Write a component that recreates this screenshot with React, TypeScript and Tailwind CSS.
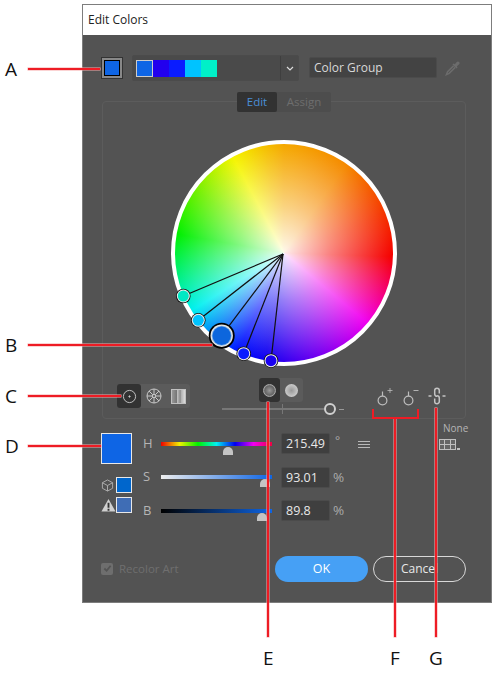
import React from "react";

function Wheel() {
  const cx = 112;
  const cy = 114;
  const dots = [
    { x: 12.3, y: 156, r: 6.5, c: "#00e8c4" },
    { x: 27.3, y: 180.3, r: 6.5, c: "#00c3ff" },
    { x: 72.7, y: 213.7, r: 6.5, c: "#0a1cff" },
    { x: 100, y: 220.7, r: 6.5, c: "#1a00f0" },
  ];
  return (
    <div className="relative w-[226px] h-[226px] mx-auto mt-[28px] rounded-full border-[4px] border-white bg-[radial-gradient(circle,rgba(255,255,255,0.92)_0%,rgba(255,255,255,0.5)_30%,rgba(255,255,255,0)_70%),conic-gradient(from_0deg,#f5a800_0deg,#f58a00_35deg,#f53000_70deg,#f50000_92deg,#f500a0_118deg,#f000f0_130deg,#7a00f0_160deg,#1000f0_190deg,#0010ff_205deg,#00f0f0_238deg,#00f090_255deg,#00f000_280deg,#70f000_305deg,#f5f500_332deg,#f5c000_350deg,#f5a800_360deg)]">
      <svg viewBox="0 0 225 225" className="absolute left-[-4px] top-[-4px] w-[225px] h-[225px] overflow-visible">
        {dots.map((d) => (
          <line key={d.x} x1={cx} y1={cy} x2={d.x} y2={d.y} stroke="#111" strokeWidth="1.2" />
        ))}
        <line x1={cx} y1={cy} x2={50.7} y2={195.7} stroke="#111" strokeWidth="1.2" />
        {dots.map((d) => (
          <g key={d.c}>
            <circle cx={d.x} cy={d.y} r={d.r + 0.8} fill="#111" />
            <circle cx={d.x} cy={d.y} r={d.r} fill="#eee" />
            <circle cx={d.x} cy={d.y} r={d.r - 1} fill={d.c} />
          </g>
        ))}
        <circle cx={50.7} cy={195.7} r={13} fill="#000" />
        <circle cx={50.7} cy={195.7} r={11.2} fill="#e8e8e8" />
        <circle cx={50.7} cy={195.7} r={10} fill="#7fb0e8" />
        <circle cx={50.7} cy={195.7} r={9.2} fill="#0d66dd" />
      </svg>
    </div>
  );
}

function Eyedropper() {
  return (
    <svg viewBox="0 0 16 16" className="w-[16px] h-[16px] ml-[8px] -mt-[1px]" fill="none">
      <path d="M8.5 3.6l1.4 0.6 1.6-2c0.9-1 2-0.9 2.6-0.2 0.7 0.7 0.7 1.7-0.2 2.6l-2 1.6 0.6 1.4-1 1-4-4z" fill="#6c6c6c" />
      <path d="M8.6 5.8L2.6 11.8 1.4 14.6 4.2 13.4 10.2 7.4" stroke="#6c6c6c" strokeWidth="1.5" />
    </svg>
  );
}

function HarmonyIcon({ sign }: { sign: "+" | "-" }) {
  return (
    <svg viewBox="0 0 20 20" className="w-[20px] h-[20px] overflow-visible" fill="none" stroke="#bdbdbd" strokeWidth="1.2">
      <circle cx="6.5" cy="13.5" r="4.4" />
      <path d="M6.5 9V4.5" />
      {sign === "+" ? <path d="M11.5 3.5h5M14 1v5" strokeWidth="0.8" /> : <path d="M11.5 3.5h5" strokeWidth="0.9" />}
    </svg>
  );
}

function LinkIcon() {
  return (
    <svg viewBox="0 0 18 18" className="w-[18px] h-[18px]" fill="none" stroke="#c4c4c4" strokeWidth="1.5">
      <path d="M11.3 6.5V3.6a2.3 2.3 0 0 0-4.6 0v3.4a2.3 2.3 0 0 0 2.3 2.3" />
      <path d="M6.7 11.5v2.9a2.3 2.3 0 0 0 4.6 0v-3.4a2.3 2.3 0 0 0-2.3-2.3" />
      <path d="M0.5 9h3M14.5 9h3" />
    </svg>
  );
}

function Thumb({ pos }: { pos: string }) {
  return <div className={`absolute w-[10px] h-[8px] rounded-t-[5px] bg-[#c4c4c4] ${pos}`} />;
}

function Row({ label, track, thumb, value, unit }: { label: string; track: string; thumb: string; value: string; unit: string }) {
  return (
    <div className="flex items-center h-[21px]">
      <span className="w-[18px] text-[13px] text-[#b5b5b5]">{label}</span>
      <div className={`relative w-[111px] h-[4px] ${track}`}>
        <Thumb pos={thumb} />
      </div>
      <div className="ml-[9px] w-[49px] h-[21px] bg-[#3f3f3f] border border-[#4b4b4b] rounded-[2px] pl-[4px] text-[12.5px] leading-[19px] text-[#e8e8e8]">{value}</div>
      <span className={`ml-[3px] text-[#aaa] ${unit === "°" ? "text-[12px] ml-[5px] -mt-[5px]" : "text-[13.5px]"}`}>{unit}</span>
    </div>
  );
}

function Label({ children, pos }: { children: React.ReactNode; pos: string }) {
  return <div className={`absolute text-[19px] leading-[24px] text-[#111] ${pos}`}>{children}</div>;
}

function Line({ pos }: { pos: string }) {
  return <div className={`absolute bg-[#ee1c25] shadow-[0_0_0_0.5px_#f7a8a8] ${pos}`} />;
}

export default function App() {
  return (
    <div className="relative w-[500px] h-[677px] bg-white overflow-hidden font-['Open_Sans','Noto_Sans',sans-serif]">
      <div className="absolute left-[82px] top-[4px] w-[410px] h-[599px] border border-[#7d7d7d] flex flex-col">
        <div className="h-[30px] bg-white px-[5px] text-[12px] leading-[30px] text-[#222]">Edit Colors</div>
        <div className="flex-1 bg-[#535353]">
          <div className="flex items-center pl-[18px] mt-[20px] h-[26px]">
            <div className="w-[22px] h-[22px] bg-[#0e65e5] shadow-[inset_0_0_0_1px_#333,inset_0_0_0_3px_#888,inset_0_0_0_4px_#000]" />
            <div className="ml-[9px] w-[167px] h-[26px] flex border border-[#4b4b4b] bg-[#4a4a4a] rounded-[2px]">
              <div className="flex-1 flex items-center pl-[3px]">
                <div className="w-[17px] h-[17px] bg-[#0e65e5] border border-[#ccc]" />
                <div className="w-[16px] h-[17px] bg-[#2200ee]" />
                <div className="w-[16px] h-[17px] bg-[#0a1cff]" />
                <div className="w-[16px] h-[17px] bg-[#00c3ff]" />
                <div className="w-[16px] h-[17px] bg-[#00f0c8]" />
              </div>
              <div className="w-[18px] border-l border-[#3f3f3f] flex items-center justify-center">
                <svg viewBox="0 0 8 5" className="w-[8px] h-[5px]" fill="none" stroke="#ddd" strokeWidth="1.2"><path d="M1 1l3 3 3-3" /></svg>
              </div>
            </div>
            <div className="ml-[10px] mb-[2px] w-[128px] h-[21px] bg-[#434343] border border-[#4b4b4b] rounded-[2px] pl-[4px] text-[12px] leading-[19px] text-[#d8d8d8]">Color Group</div>
            <Eyedropper />
          </div>

          <div className="ml-[19px] mt-[20px] w-[364px] h-[318px] border border-[#5c5c5c] rounded-[4px]">
            <div className="flex w-[94px] h-[20px] mx-auto -mt-[10px] bg-[#4d4d4d] rounded-[2px] text-[11.5px] leading-[20px] font-medium text-center">
              <div className="w-[40px] bg-[#323232] rounded-[2px] text-[#4a8fd8]">Edit</div>
              <div className="flex-1 text-[#6e6e6e]">Assign</div>
            </div>
            <Wheel />
            <div className="flex items-start mt-[12px]">
              <div className="ml-[14px] mt-[6px] w-[73px] h-[24px] flex bg-[#5b5b5b] rounded-[3px]">
                <div className="w-[24px] h-[24px] bg-[#323232] rounded-[3px] flex items-center justify-center">
                  <svg viewBox="0 0 16 16" className="w-[15px] h-[15px]" fill="none" stroke="#c8c8c8"><circle cx="8" cy="8" r="6.5" /><circle cx="8" cy="8" r="0.7" fill="#c8c8c8" /></svg>
                </div>
                <div className="w-[25px] flex items-center justify-center">
                  <svg viewBox="0 0 16 16" className="w-[16px] h-[16px]" fill="none" stroke="#c8c8c8"><circle cx="8" cy="8" r="7" /><circle cx="8" cy="8" r="1.6" /><path d="M8 1v5.4M8 9.6V15M1 8h5.4M9.6 8H15M3 3l3.8 3.8M9.2 9.2L13 13M13 3L9.2 6.8M6.8 9.2L3 13" /></svg>
                </div>
                <div className="w-[24px] flex items-center justify-center">
                  <div className="w-[15px] h-[15px] border border-[#c0c0c0] bg-[linear-gradient(90deg,#999_0%,#777_35%,#ccc_36%,#888_65%,#aaa_66%,#ddd_100%)]" />
                </div>
              </div>
              <div className="ml-[32px] w-[123px]">
                <div className="ml-[37px] w-[44px] h-[24px] flex bg-[#5b5b5b] rounded-[3px]">
                  <div className="w-[21px] h-[24px] bg-[#323232] rounded-[3px] flex items-center justify-center">
                    <div className="w-[13px] h-[13px] rounded-full border border-[#aaa] bg-[radial-gradient(circle,#999_0%,#666_60%,#aaa_100%)]" />
                  </div>
                  <div className="flex-1 flex items-center justify-center">
                    <div className="w-[13px] h-[13px] rounded-full bg-[radial-gradient(circle,#999_0%,#e0e0e0_100%)]" />
                  </div>
                </div>
                <div className="relative h-[12px] mt-[1px] flex items-center">
                  <div className="w-[102px] h-[2px] bg-[#777]" />
                  <div className="w-[12px] h-[12px] rounded-full border-[2px] border-[#d0d0d0]" />
                  <div className="ml-[3px] w-[5px] h-[1px] bg-[#999]" />
                  <div className="absolute left-[60px] top-[1px] w-[1px] h-[10px] bg-[#777]" />
                </div>
              </div>
              <div className="ml-[31px] mt-[9px] flex gap-[6px]">
                <HarmonyIcon sign="+" />
                <HarmonyIcon sign="-" />
              </div>
              <div className="ml-[6px] mt-[9px]"><LinkIcon /></div>
            </div>
          </div>

          <div className="flex pl-[18px] mt-[14px]">
            <div className="w-[42px]">
              <div className="w-[31px] h-[31px] bg-[#0e65e5] border border-[#e8e8e8]" />
              <div className="mt-[13px] flex items-center">
                <svg viewBox="0 0 14 14" className="w-[13px] h-[13px]" fill="none" stroke="#b0b0b0"><path d="M7 1l5.5 3v6L7 13l-5.5-3V4zM1.5 4L7 7l5.5-3M7 7v6" /></svg>
                <div className="ml-[2px] w-[16px] h-[16px] bg-[#0066cc] border border-[#e8e8e8]" />
              </div>
              <div className="mt-[4px] flex items-center">
                <svg viewBox="0 0 16 14" className="w-[15px] h-[14px]"><path d="M8 0.5L15.5 14H0.5z" fill="#d0d0d0" /><path d="M7 4.5h2v5.5H7zM7 11h2v2H7z" fill="#333" /></svg>
                <div className="-ml-[0px] w-[16px] h-[16px] bg-[#3f6db5] border border-[#e8e8e8]" />
              </div>
            </div>
            <div className="flex flex-col gap-[12.5px]">
              <Row label="H" value="215.49" unit="°" track="bg-[linear-gradient(90deg,#f00000,#f0f000,#00f000,#00f0f0,#0000f0,#f000f0,#f00040)]" thumb="left-[62px] top-[5px]" />
              <Row label="S" value="93.01" unit="%" track="bg-[linear-gradient(90deg,#eeeeee,#0e65e5)]" thumb="left-[99px] top-[4px]" />
              <Row label="B" value="89.8" unit="%" track="bg-[linear-gradient(90deg,#000000,#0e65e5)]" thumb="left-[96px] top-[4px]" />
            </div>
            <div className="ml-[14px] mt-[8px] w-[12px] h-[7px] border-y border-[#b8b8b8] relative">
              <div className="absolute left-0 top-[2px] w-[12px] h-[1px] bg-[#b8b8b8]" />
            </div>
          </div>
        </div>
      </div>

      <div className="absolute left-[443px] top-[421px] text-[10px] leading-[14px] font-medium text-[#b5b5b5]">None</div>

      <div className="absolute left-[439px] top-[439px] flex items-end">
        <div className="w-[17px] h-[11px] border border-[#c0c0c0] grid grid-cols-3 grid-rows-2 gap-[1px] bg-[#c0c0c0]">
          <div className="bg-[#666]" /><div className="bg-[#666]" /><div className="bg-[#666]" /><div className="bg-[#666]" /><div className="bg-[#666]" /><div className="bg-[#666]" />
        </div>
        <div className="ml-[1px] w-[3px] h-[2px] bg-[#c0c0c0]" />
      </div>

      <div className="absolute left-[101px] top-[560px] flex items-center">
        <div className="w-[12px] h-[12px] bg-[#6e6e6e] rounded-[2px] flex items-center justify-center">
          <svg viewBox="0 0 10 10" className="w-[9px] h-[9px]" fill="none" stroke="#545454" strokeWidth="2"><path d="M1.5 5l2.5 2.5L8.5 2" /></svg>
        </div>
        <span className="ml-[6px] text-[11.5px] text-[#6f6f6f]">Recolor Art</span>
      </div>

      <div className="absolute left-[275px] top-[556px] flex gap-[5px]">
        <div className="w-[93px] h-[26px] rounded-full bg-[#46a0f5] text-center text-[12.5px] leading-[26px] text-white">OK</div>
        <div className="w-[93px] h-[26px] rounded-full border border-[#d8d8d8] text-center text-[12px] leading-[24px] text-[#e8e8e8]">Cancel</div>
      </div>

      <Line pos="left-[28px] top-[68px] w-[72px] h-[2px]" />
      <Line pos="left-[28px] top-[344px] w-[184px] h-[2px]" />
      <Line pos="left-[28px] top-[395px] w-[93px] h-[2px]" />
      <Line pos="left-[28px] top-[445px] w-[73px] h-[2px]" />
      <Line pos="left-[267px] top-[402px] w-[2px] h-[235px]" />
      <Line pos="left-[394px] top-[418px] w-[2px] h-[219px]" />
      <Line pos="left-[435px] top-[408px] w-[2px] h-[229px]" />
      <div className="absolute left-[372px] top-[409px] w-[47px] h-[10px] border-x-2 border-b-2 border-[#ee1c25]" />

      <Label pos="left-[5px] top-[57px]">A</Label>
      <Label pos="left-[5px] top-[333px]">B</Label>
      <Label pos="left-[5px] top-[384px]">C</Label>
      <Label pos="left-[5px] top-[434px]">D</Label>
      <Label pos="left-[263px] top-[646px]">E</Label>
      <Label pos="left-[390px] top-[646px]">F</Label>
      <Label pos="left-[429px] top-[646px]">G</Label>
    </div>
  );
}
